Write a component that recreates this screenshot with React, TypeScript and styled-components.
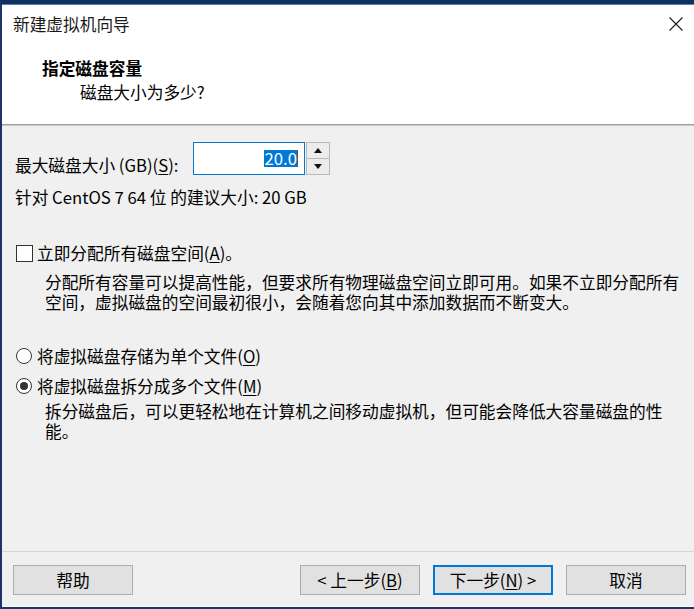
import React from "react";
import styled, { createGlobalStyle } from "styled-components";

const GlobalStyle = createGlobalStyle`
  html, body {
    margin: 0;
    padding: 0;
    background: #f0f0f0;
  }
  body {
    font-family: "Noto Sans CJK SC", "Noto Sans", sans-serif;
    font-size: 16.7px;
    color: #000;
  }
`;

const Window = styled.div`
  width: 694px;
  height: 609px;
  box-sizing: border-box;
  border-top: 4px solid #0e2f62;
  border-left: 2px solid #1c3566;
  border-bottom: 2px solid #1c3566;
  background: #f0f0f0;
  display: flex;
  flex-direction: column;
  overflow: hidden;
`;

const Header = styled.div`
  height: 120px;
  background: #ffffff;
  display: flex;
  flex-direction: column;
  box-shadow: inset 0 1px 0 #5d7fb0;
`;

const TitleBar = styled.div`
  height: 40px;
  display: flex;
  align-items: center;
  justify-content: space-between;
  padding: 0 11px 0 11px;
`;

const TitleText = styled.div`
  line-height: 20px;
  color: #1a1a1a;
`;

const CloseButton = styled.div`
  width: 14px;
  height: 14px;
  display: flex;
  svg {
    display: block;
  }
`;

const Heading = styled.div`
  margin: 14px 0 0 40px;
  font-weight: 700;
  line-height: 20px;
`;

const SubHeading = styled.div`
  margin: 4px 0 0 78px;
  line-height: 20px;
`;

const Divider = styled.div`
  height: 1px;
  background: #a0a0a0;
  border-bottom: 1px solid #c8c8c8;
`;

const Body = styled.div`
  flex: 1;
  padding: 0 13px;
  display: flex;
  flex-direction: column;
`;

const SizeRow = styled.div`
  margin-top: 16px;
  display: flex;
  align-items: flex-end;
`;

const SizeLabel = styled.div`
  width: 178px;
  line-height: 20px;
  white-space: nowrap;
`;

const Mnemonic = styled.span`
  text-decoration: underline;
  text-underline-offset: 2px;
`;

const SpinBox = styled.div`
  display: flex;
  height: 33px;
`;

const SpinInput = styled.div`
  width: 104px;
  height: 31px;
  border: 1px solid #0078d7;
  background: #fff;
  display: flex;
  align-items: center;
  justify-content: flex-end;
  padding-right: 6px;
`;

const Selected = styled.span`
  background: #0078d7;
  color: #fff;
  line-height: 17px;
  padding: 0 0 0 1px;
`;

const Caret = styled.span`
  display: inline-block;
  width: 1px;
  height: 17px;
  background: #8a4b1c;
`;

const SpinButtons = styled.div`
  width: 22px;
  margin-left: 1px;
  border: 1px solid #b9b9b9;
  display: flex;
  flex-direction: column;
  background: #ececec;
`;

const SpinButton = styled.div<{ $down?: boolean }>`
  flex: 1;
  display: flex;
  align-items: center;
  justify-content: center;
  border-top: ${(p) => (p.$down ? "1px solid #b9b9b9" : "none")};
`;

const Recommend = styled.div`
  margin-top: 12px;
  line-height: 20px;
`;

const OptionRow = styled.label<{ $gap: number }>`
  margin-top: ${(p) => p.$gap}px;
  display: flex;
  align-items: center;
  line-height: 20px;
`;

const CheckBox = styled.span`
  width: 15px;
  height: 15px;
  margin: 0 4px 0 1px;
  border: 1px solid #333;
  background: #fff;
  flex-shrink: 0;
`;

const Radio = styled.span<{ $checked?: boolean }>`
  width: 14px;
  height: 14px;
  margin: 0 5px 0 1px;
  border: 1px solid #333;
  border-radius: 50%;
  background: #fff;
  flex-shrink: 0;
  display: flex;
  align-items: center;
  justify-content: center;
  &::after {
    content: "";
    width: 8px;
    height: 8px;
    border-radius: 50%;
    background: ${(p) => (p.$checked ? "#333" : "transparent")};
  }
`;

const Description = styled.div<{ $gap: number }>`
  margin: ${(p) => p.$gap}px 0 0 30px;
  line-height: 20px;
`;

const Footer = styled.div`
  border-top: 1px solid #d4d4d4;
  border-bottom: 1px solid #fdfdfd;
  margin-top: auto;
`;

const ButtonBar = styled.div`
  display: flex;
  align-items: center;
  padding: 13px 8px 11px 11px;
`;

const ButtonGroup = styled.div`
  margin-left: auto;
  display: flex;
  gap: 13px;
`;

const Button = styled.button<{ $focused?: boolean }>`
  width: 120px;
  height: 30px;
  box-sizing: border-box;
  font: inherit;
  color: #000;
  line-height: 20px;
  background: #e1e1e1;
  border: ${(p) => (p.$focused ? "2px solid #0078d7" : "1px solid #adadad")};
  padding: 0;
  display: flex;
  align-items: center;
  justify-content: center;
`;

const ArrowUp = () => (
  <svg width="8" height="5" viewBox="0 0 8 5">
    <path d="M4 0 L8 5 L0 5 Z" fill="#111" />
  </svg>
);

const ArrowDown = () => (
  <svg width="8" height="5" viewBox="0 0 8 5">
    <path d="M0 0 L8 0 L4 5 Z" fill="#111" />
  </svg>
);

export default function App() {
  return (
    <>
      <GlobalStyle />
      <Window>
        <Header>
          <TitleBar>
            <TitleText>新建虚拟机向导</TitleText>
            <CloseButton>
              <svg width="14" height="14" viewBox="0 0 14 14">
                <path
                  d="M0.5 0.5 L13.5 13.5 M13.5 0.5 L0.5 13.5"
                  stroke="#222"
                  strokeWidth="1.2"
                />
              </svg>
            </CloseButton>
          </TitleBar>
          <Heading>指定磁盘容量</Heading>
          <SubHeading>磁盘大小为多少?</SubHeading>
        </Header>
        <Divider />
        <Body>
          <SizeRow>
            <SizeLabel>
              最大磁盘大小 (GB)(<Mnemonic>S</Mnemonic>):
            </SizeLabel>
            <SpinBox>
              <SpinInput>
                <Selected>20.0</Selected>
                <Caret />
              </SpinInput>
              <SpinButtons>
                <SpinButton>
                  <ArrowUp />
                </SpinButton>
                <SpinButton $down>
                  <ArrowDown />
                </SpinButton>
              </SpinButtons>
            </SpinBox>
          </SizeRow>
          <Recommend>针对 CentOS 7 64 位 的建议大小: 20 GB</Recommend>

          <OptionRow $gap={36}>
            <CheckBox />
            立即分配所有磁盘空间(<Mnemonic>A</Mnemonic>)。
          </OptionRow>
          <Description $gap={9}>
            分配所有容量可以提高性能，但要求所有物理磁盘空间立即可用。如果不立即分配所有
            <br />
            空间，虚拟磁盘的空间最初很小，会随着您向其中添加数据而不断变大。
          </Description>

          <OptionRow $gap={34}>
            <Radio />
            将虚拟磁盘存储为单个文件(<Mnemonic>O</Mnemonic>)
          </OptionRow>
          <OptionRow $gap={10}>
            <Radio $checked />
            将虚拟磁盘拆分成多个文件(<Mnemonic>M</Mnemonic>)
          </OptionRow>
          <Description $gap={5}>
            拆分磁盘后，可以更轻松地在计算机之间移动虚拟机，但可能会降低大容量磁盘的性
            <br />
            能。
          </Description>
        </Body>
        <Footer>
          <ButtonBar>
            <Button>帮助</Button>
            <ButtonGroup>
              <Button>
                &lt; 上一步(<Mnemonic>B</Mnemonic>)
              </Button>
              <Button $focused>
                下一步(<Mnemonic>N</Mnemonic>) &gt;
              </Button>
              <Button>取消</Button>
            </ButtonGroup>
          </ButtonBar>
        </Footer>
      </Window>
    </>
  );
}
